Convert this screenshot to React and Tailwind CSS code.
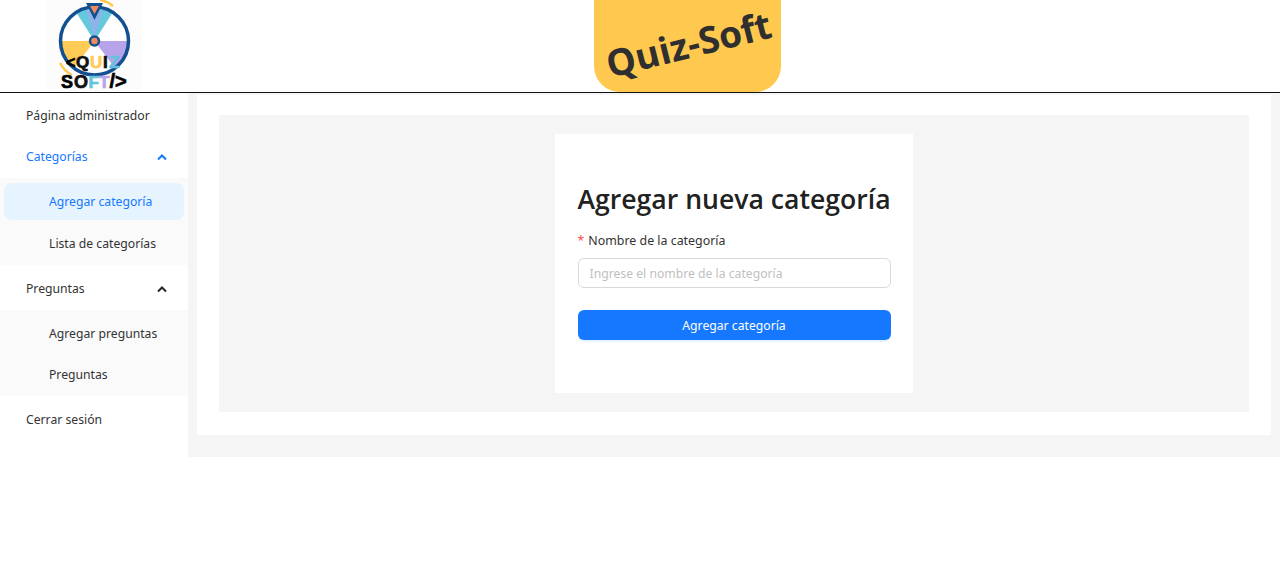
import React from "react";

function Chevron({ color }) {
  return (
    <svg width="10" height="7" viewBox="0 0 10 7" fill="none" stroke={color} strokeWidth="2" className="block">
      <path d="M1 5.5 L5 1.5 L9 5.5" />
    </svg>
  );
}

const F = "'Liberation Sans', sans-serif";

function Logo() {
  return (
    <div className="w-[94px] h-[92px] bg-[#fcfcfc] ml-[47px] shrink-0">
      <svg width="94" height="92" viewBox="0 0 94 92">
        <path d="M53 0 Q 60 1 66 6" stroke="#ffc94f" strokeWidth="2.5" fill="none" />
        <path d="M13 63 Q 17 71 25 75" stroke="#ffc94f" strokeWidth="2.5" fill="none" />
        <circle cx="47.5" cy="41" r="34" fill="#fff" />
        <path d="M47.5 41 L29 12 Q47.5 5 66 12 Z" fill="#66c8dc" />
        <path d="M47.5 38 L39 10 L56 10 Z" fill="#8db4e8" />
        <path d="M47.5 41 L13 41 Q14 58 27 68 Z" fill="#ffcb57" />
        <path d="M47.5 41 L82 41 Q81 58 68 68 Z" fill="#b6a3ea" />
        <circle cx="47.5" cy="41" r="34" fill="none" stroke="#12508f" strokeWidth="3.5" />
        <circle cx="47.5" cy="41" r="4.5" fill="#f08a5d" stroke="#12508f" strokeWidth="2.5" />
        <path d="M39 3 L56 3 L47.5 20 Z" fill="#12508f" />
        <path d="M43 6 L52 6 L47.5 14 Z" fill="#f08a5d" />
        <g fontFamily={F} fontWeight="700" stroke="currentColor" strokeWidth="0.7">
          <text x="19" y="68" fontSize="16" fill="#000" color="#000">{"<"}</text>
          <text x="29" y="68" fontSize="17" fill="#111" color="#111">Q</text>
          <text x="43" y="68" fontSize="17" fill="#ffcb57" color="#ffcb57">U</text>
          <text x="56" y="68" fontSize="17" fill="#111" color="#111">I</text>
          <text x="62" y="68" fontSize="17" fill="#62c4dc" color="#62c4dc">Z</text>
          <text x="14" y="87.5" fontSize="18" fill="#000" color="#000">S</text>
          <text x="27" y="87.5" fontSize="18" fill="#111" color="#111">O</text>
          <text x="41.5" y="87.5" fontSize="17" fill="#62c4dc" color="#62c4dc">F</text>
          <text x="52" y="87.5" fontSize="17" fill="#b6a3ea" color="#b6a3ea">T</text>
          <text x="62.5" y="87.5" fontSize="20" fill="#000" color="#000">{"/>"}</text>
        </g>
      </svg>
    </div>
  );
}

function Item({ children, className = "" }) {
  return <div className={"flex items-center " + className}>{children}</div>;
}

export default function App() {
  return (
    <div className="w-[1280px] font-['Noto_Sans',sans-serif] text-[12.2px] text-[#333] bg-white">
      <header className="h-[93px] border-b border-[#111] bg-white relative flex">
        <Logo />
        <div className="ml-[453px] w-[187px] h-[92px] bg-[#ffc94f] rounded-b-[26px] flex items-center justify-center">
          <span className="font-['Open_Sans',sans-serif] font-bold text-[37px] leading-none text-[#2f2f2f] -rotate-[14deg] -mt-[6px] ml-[2px]">Quiz-Soft</span>
        </div>
      </header>
      <div className="flex h-[364px] bg-[#f5f5f5]">
        <aside className="w-[188px] shrink-0 bg-white pt-[3px]">
          <Item className="h-[40px] pl-[26px]">Página administrador</Item>
          <div className="h-[1px]" />
          <Item className="h-[40px] pl-[26px] pr-[21px] pt-[1px] justify-between text-[#1677ff]">
            <span>Categorías</span>
            <Chevron color="#1677ff" />
          </Item>
          <div className="bg-[#fafafa] h-[87px] pt-[5px] mt-[1px]">
            <div className="mx-[4px] h-[37px] pt-[2px] rounded-lg bg-[#e6f4ff] text-[#1677ff] pl-[45px] flex items-center">Agregar categoría</div>
            <div className="h-[45px] pt-[4px] pl-[49px] flex items-center">Lista de categorías</div>
          </div>
          <Item className="pl-[26px] pr-[21px] pt-[4px] justify-between h-[45px]">
            <span>Preguntas</span>
            <Chevron color="#262626" />
          </Item>
          <div className="bg-[#fafafa] h-[86px] pt-[2px]">
            <div className="h-[41px] pt-[4px] pl-[49px] flex items-center">Agregar preguntas</div>
            <div className="h-[41px] pt-[4px] pl-[49px] flex items-center">Preguntas</div>
          </div>
          <Item className="pl-[26px] pt-[2px] h-[46px]">Cerrar sesión</Item>
        </aside>
        <main className="flex-1 pl-[9px] pr-[9px] pt-[2px] pb-[22px]">
          <div className="bg-white h-full pt-[20px] px-[22px]">
            <div className="bg-[#f5f5f5] h-[297px] pt-[19px] flex justify-center">
              <div className="w-[358px] h-[259px] bg-white px-[22.5px] pt-[46px]">
                <h1 className="text-[26.6px] leading-[38px] font-semibold text-[#212121] whitespace-nowrap font-['Open_Sans',sans-serif]">Agregar nueva categoría</h1>
                <label className="block mt-[12px] leading-[22px] h-[22px] text-[12.4px]">
                  <span className="text-[#ff4d4f] mr-[4px]">*</span>Nombre de la categoría
                </label>
                <input
                  readOnly
                  placeholder="Ingrese el nombre de la categoría"
                  className="mt-[6px] block w-full h-[30px] rounded-md border border-[#d9d9d9] px-[11px] placeholder:text-[#bfbfbf] outline-none"
                />
                <button className="mt-[22px] pt-[2px] block w-full h-[30px] rounded-md bg-[#1677ff] text-white text-[12.2px] shadow-[0_2px_0_rgba(5,145,255,0.1)]">Agregar categoría</button>
              </div>
            </div>
          </div>
        </main>
      </div>
      <div className="h-[126px] bg-white" />
    </div>
  );
}
